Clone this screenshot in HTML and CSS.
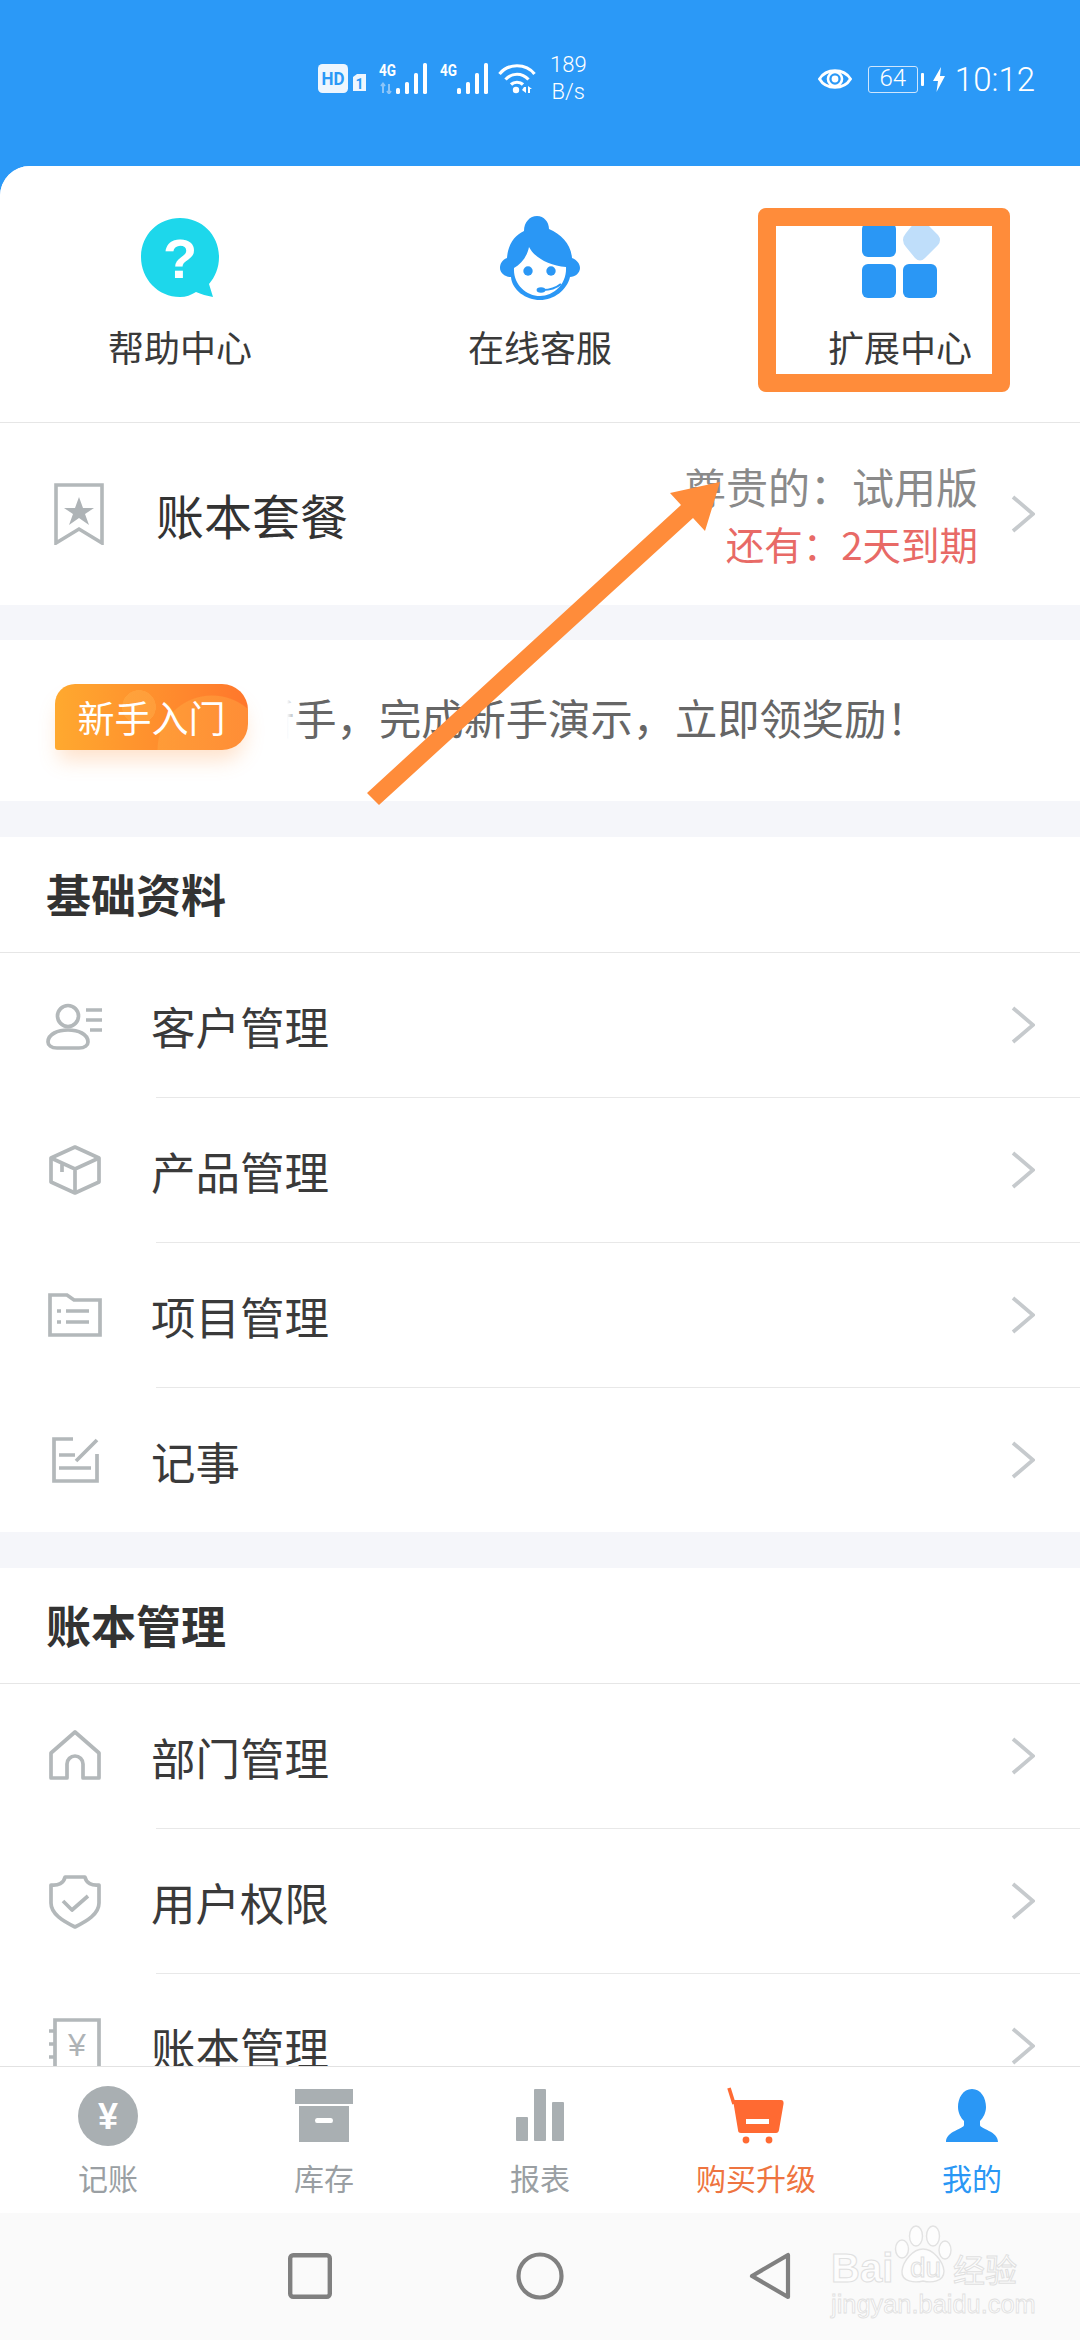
FILE: index.html
```html
<!DOCTYPE html>
<html lang="zh-CN">
<head>
  <meta charset="UTF-8" />
  <meta name="viewport" content="width=device-width, initial-scale=1.0"/>
  <title>我的</title>
  <link rel="stylesheet" href="styles.css">
</head>
<body>
  <svg class="defs" width="0" height="0">
    <symbol id="chevron" viewBox="0 0 24 38">
      <path d="M2 2 L22 19 L2 36" fill="none" stroke="#c6cacd" stroke-width="3.8"/>
    </symbol>
    <symbol id="bars" viewBox="0 0 50 31">
      <rect x="17" y="25" width="4" height="6" rx="1.6" fill="#fff"/>
      <rect x="26" y="19" width="4" height="12" rx="1.6" fill="#fff"/>
      <rect x="35" y="10" width="4" height="21" rx="1.6" fill="#fff"/>
      <rect x="44" y="0" width="4" height="31" rx="1.6" fill="#fff"/>
    </symbol>
  </svg>

  <div class="page">
    <header class="statusbar">
      <div class="status-left">
        <svg class="st-hd" width="50" height="30" viewBox="0 0 50 30">
          <rect x="0" y="0" width="30" height="29" rx="4.5" fill="#eef6fe"/>
          <text x="15" y="21" class="st-bold" text-anchor="middle" font-size="18" fill="#2b99f7" textLength="23" lengthAdjust="spacingAndGlyphs">HD</text>
          <path d="M35 13 L39 10 H48 V27 H35Z" fill="#eef6fe"/>
          <text x="41.5" y="24.5" class="st-bold" text-anchor="middle" font-size="14" fill="#2b99f7">1</text>
        </svg>
        <svg class="st-signal" width="50" height="37" viewBox="0 -6 50 37">
          <text x="0" y="13" class="st-bold" font-size="17" fill="#fff" textLength="17" lengthAdjust="spacingAndGlyphs">4G</text>
          <path d="M4 30 V21 M2 23 L4 20.5 L6 23 M10 21 V30 M8 28 L10 30.5 L12 28" fill="none" stroke="#8cc5f8" stroke-width="2"/>
          <use href="#bars" width="50" height="31"/>
        </svg>
        <svg class="st-signal" width="50" height="37" viewBox="0 -6 50 37">
          <text x="0" y="13" class="st-bold" font-size="17" fill="#fff" textLength="17" lengthAdjust="spacingAndGlyphs">4G</text>
          <use href="#bars" width="50" height="31"/>
        </svg>
        <svg class="st-wifi" width="38" height="30" viewBox="0 0 38 30">
          <g fill="none" stroke="#fff" stroke-width="3.2">
            <path d="M1.5 10 C10 -1 28 -1 36.5 10"/>
            <path d="M7.5 15.5 C14 8.5 24 8.5 30.5 15.5"/>
            <path d="M13 20.5 C16 17.5 22 17.5 25 20.5"/>
          </g>
          <circle cx="18" cy="26" r="3.2" fill="#fff"/>
          <path d="M26 23 H28 V29 L24 26Z M30 22 L34 25 L30 25Z M30 25 H32 V29 H30Z" fill="#fff"/>
        </svg>
        <div class="st-speed"><span>189</span><span>B/s</span></div>
      </div>
      <div class="status-right">
        <svg width="34" height="26" viewBox="0 0 34 26">
          <path d="M1.5 13 C8 2 26 2 32.5 13 C26 24 8 24 1.5 13Z" fill="none" stroke="#fff" stroke-width="2.8"/>
          <circle cx="17" cy="13" r="7" fill="none" stroke="#fff" stroke-width="2.6"/>
          <circle cx="17" cy="13" r="3.4" fill="#fff"/>
        </svg>
        <div class="st-battery">64</div>
        <span class="st-tip"></span>
        <svg width="12" height="25" viewBox="0 0 12 25"><path d="M8 0 L0 14 H5 L3.5 25 L12 9 H7Z" fill="#fff"/></svg>
        <span class="st-time">10:12</span>
      </div>
    </header>

    <main class="content">
      <section class="shortcuts">
        <div class="shortcut">
          <svg class="shortcut-icon" width="78" height="84" viewBox="0 0 78 80">
            <path d="M39 0 C61 0 78 17 78 39 C78 50 74 59 68 66 L72 79 C66 78 60 76 55 74 C50 77 45 79 39 79 C17 79 0 61 0 39 C0 17 17 0 39 0Z" fill="#1dd7eb"/>
            <text x="39" y="60" text-anchor="middle" font-size="56" font-weight="700" class="icon-glyph" fill="#fff">?</text>
          </svg>
          <span>帮助中心</span>
        </div>
        <div class="shortcut">
          <svg class="shortcut-icon" width="82" height="84" viewBox="0 0 82 84">
            <path d="M8 42 C9 28 16 19 25 15 C25 6 31 0 38 0 C45 0 50 6 50 13 C62 18 72 28 73 42 C78 44 81 48 81 52 C81 57 76 61 71 61 C68 74 55 84 41 84 C27 84 13 74 12 61 C6 61 1 57 1 52 C1 48 3 44 8 42Z" fill="#2a97f5"/>
            <path d="M15 52 C22 48 28 41 30 31 C35 41 50 50 67 51 C68 68 55 80 41 80 C27 80 14 68 15 52Z" fill="#fff"/>
            <circle cx="29" cy="55" r="4.7" fill="#2a97f5"/>
            <circle cx="52" cy="55" r="4.7" fill="#2a97f5"/>
            <path d="M62 68 C57 72 50 74 44 74" fill="none" stroke="#2a97f5" stroke-width="2.2"/>
            <ellipse cx="42" cy="74" rx="4.4" ry="2.8" fill="#2a97f5"/>
          </svg>
          <span>在线客服</span>
        </div>
        <div class="shortcut">
          <svg class="shortcut-icon" width="80" height="84" viewBox="0 0 80 84">
            <rect x="2" y="7" width="34" height="34" rx="6" fill="#2a97f5"/>
            <rect x="2" y="48" width="34" height="34" rx="6" fill="#2a97f5"/>
            <rect x="43" y="48" width="34" height="34" rx="6" fill="#2a97f5"/>
            <path d="M55 6 Q60 0 65 6 L78 19 Q82 24 78 29 L65 42 Q60 47 55 42 L46 31 Q40 24 46 17Z" fill="#bfdefa"/>
          </svg>
          <span>扩展中心</span>
        </div>
      </section>

      <section class="package">
        <svg class="package-icon" width="50" height="62" viewBox="0 0 50 62">
          <path d="M2 2 H48 V60 L25 46 L2 60Z" fill="none" stroke="#b3b8ba" stroke-width="3.6"/>
          <path d="M25 14 L29 25 H40 L31 31 L35 42 L25 35 L15 42 L19 31 L10 25 H21Z" fill="#aeb3b6"/>
        </svg>
        <span class="package-name">账本套餐</span>
        <div class="package-info">
          <span class="package-plan">尊贵的：试用版</span>
          <span class="package-expire">还有：2天到期</span>
        </div>
        <svg class="chevron"><use href="#chevron"/></svg>
      </section>

      <section class="banner">
        <div class="banner-badge">新手入门</div>
        <div class="banner-marquee"><span>新手，完成新手演示，立即领奖励！</span></div>
      </section>

      <section class="group">
        <h2 class="group-title">基础资料</h2>
        <div class="row">
          <svg class="row-icon" viewBox="0 0 60 60">
            <g fill="none" stroke="#b3b8ba" stroke-width="3.7">
              <circle cx="23" cy="21" r="10.5"/>
              <path d="M12 53 C6 53 3 50 3 47 C3 39 13 35 23 35 C33 35 43 39 43 47 C43 50 40 53 34 53Z"/>
              <path d="M41 15 H57 M41 25 H57 M45 35 H57"/>
            </g>
          </svg>
          <span class="row-text">客户管理</span>
          <svg class="chevron"><use href="#chevron"/></svg>
        </div>
        <hr class="divider">
        <div class="row">
          <svg class="row-icon" viewBox="0 0 60 60">
            <g fill="none" stroke="#b3b8ba" stroke-width="3.7" stroke-linejoin="round">
              <path d="M30 7 L54 18 V42 L30 53 L6 42 V18Z"/>
              <path d="M6 18 L30 29 L54 18 M30 29 V53 M17 24 V32"/>
            </g>
          </svg>
          <span class="row-text">产品管理</span>
          <svg class="chevron"><use href="#chevron"/></svg>
        </div>
        <hr class="divider">
        <div class="row">
          <svg class="row-icon" viewBox="0 0 60 60">
            <g fill="none" stroke="#b3b8ba" stroke-width="3.7">
              <path d="M5 10 H22 L29 15 H55 V50 H5Z"/>
              <path d="M12 26 H16 M12 37 H16 M21 26 H44 M21 37 H44"/>
            </g>
          </svg>
          <span class="row-text">项目管理</span>
          <svg class="chevron"><use href="#chevron"/></svg>
        </div>
        <hr class="divider">
        <div class="row">
          <svg class="row-icon" viewBox="0 0 60 60">
            <g fill="none" stroke="#b3b8ba" stroke-width="3.7">
              <path d="M28 9 H9 V51 H52 V24"/>
              <path d="M14 25 H30 M14 38 H46 M31 31 L52 10"/>
            </g>
          </svg>
          <span class="row-text">记事</span>
          <svg class="chevron"><use href="#chevron"/></svg>
        </div>
      </section>

      <section class="group">
        <h2 class="group-title">账本管理</h2>
        <div class="row">
          <svg class="row-icon" viewBox="0 0 60 60">
            <path d="M30 6 L54 27 V52 H38 V38 A8 8 0 0 0 22 38 V52 H6 V27Z" fill="none" stroke="#b3b8ba" stroke-width="3.7" stroke-linejoin="round"/>
          </svg>
          <span class="row-text">部门管理</span>
          <svg class="chevron"><use href="#chevron"/></svg>
        </div>
        <hr class="divider">
        <div class="row">
          <svg class="row-icon" viewBox="0 0 60 60">
            <g fill="none" stroke="#b3b8ba" stroke-width="3.7" stroke-linejoin="round">
              <path d="M20 6 H40 C41 12 47 15 54 14 V32 C54 43 42 50 30 56 C18 50 6 43 6 32 V14 C13 15 19 12 20 6Z"/>
              <path d="M18 30 L27 39 L43 25"/>
            </g>
          </svg>
          <span class="row-text">用户权限</span>
          <svg class="chevron"><use href="#chevron"/></svg>
        </div>
        <hr class="divider">
        <div class="row">
          <svg class="row-icon" viewBox="0 0 60 60">
            <g fill="none" stroke="#b3b8ba" stroke-width="3.7">
              <path d="M10 4 H54 V56 H10Z"/>
              <path d="M4 15 H11 M4 28 H11 M4 41 H11"/>
            </g>
            <text x="32" y="40" text-anchor="middle" font-size="32" class="icon-glyph" fill="#aeb3b6">¥</text>
          </svg>
          <span class="row-text">账本管理</span>
          <svg class="chevron"><use href="#chevron"/></svg>
        </div>
      </section>
    </main>

    <nav class="tabbar">
      <div class="tab">
        <svg width="60" height="60" viewBox="0 0 60 60">
          <circle cx="30" cy="30" r="30" fill="#a9afb2"/>
          <text x="30" y="43" text-anchor="middle" font-size="36" font-weight="700" class="icon-glyph" fill="#fff">¥</text>
        </svg>
        <span>记账</span>
      </div>
      <div class="tab">
        <svg width="60" height="60" viewBox="0 0 60 60">
          <rect x="1" y="3" width="58" height="15" fill="#a9afb2"/>
          <path d="M5 20 H55 V56 H5Z M23 32 Q21 32 21 34.5 Q21 37 23 37 H37 Q39 37 39 34.5 Q39 32 37 32Z" fill="#a9afb2" fill-rule="evenodd"/>
        </svg>
        <span>库存</span>
      </div>
      <div class="tab">
        <svg width="60" height="60" viewBox="0 0 60 60">
          <rect x="6" y="31" width="12" height="24" rx="1" fill="#a9afb2"/>
          <rect x="24" y="3" width="12" height="52" rx="1" fill="#a9afb2"/>
          <rect x="42" y="16" width="12" height="39" rx="1" fill="#a9afb2"/>
        </svg>
        <span>报表</span>
      </div>
      <div class="tab tab-orange">
        <svg width="60" height="60" viewBox="0 0 60 60">
          <path d="M3 2 L8 18" stroke="#ff6a32" stroke-width="3.6" fill="none"/>
          <path d="M7 14 H55 Q58 14 57.5 18 L53 44 Q52.5 47 50 47 H15 Q12 47 12 44Z M20 33 V38 H43 V33Z" fill="#ff6a32" fill-rule="evenodd"/>
          <circle cx="20" cy="54" r="3.4" fill="#ff6a32"/>
          <circle cx="43" cy="54" r="3.4" fill="#ff6a32"/>
        </svg>
        <span>购买升级</span>
      </div>
      <div class="tab tab-blue">
        <svg width="60" height="60" viewBox="0 0 60 60">
          <path d="M30 3 C39 3 44 12 44 21 C44 27 41 32 38 35 V39 C38 43 56 45 56 56 H4 C4 45 22 43 22 39 V35 C19 32 16 27 16 21 C16 12 21 3 30 3Z" fill="#2a97f5"/>
        </svg>
        <span>我的</span>
      </div>
    </nav>

    <footer class="navbar">
      <svg width="44" height="46" viewBox="0 0 44 46"><rect x="2.2" y="2.2" width="39.6" height="41.6" rx="3" fill="none" stroke="#808080" stroke-width="4.4"/></svg>
      <svg width="48" height="48" viewBox="0 0 48 48"><circle cx="24" cy="24" r="21.5" fill="none" stroke="#808080" stroke-width="4.2"/></svg>
      <svg width="42" height="48" viewBox="0 0 42 48"><path d="M39 3 V45 L3 24Z" fill="none" stroke="#808080" stroke-width="4.2" stroke-linejoin="round"/></svg>
    </footer>

    <!-- baidu jingyan watermark -->
    <div class="watermark">
      <svg class="wm-paw" width="60" height="60" viewBox="0 0 60 60">
        <g fill="#fdfdfd" stroke="#e2e2e2" stroke-width="1.4">
          <ellipse cx="9" cy="24" rx="6.5" ry="9"/>
          <ellipse cx="23" cy="11" rx="6.5" ry="10"/>
          <ellipse cx="40" cy="11" rx="6.5" ry="10"/>
          <ellipse cx="52" cy="25" rx="6" ry="9"/>
          <path d="M30 24 C40 24 50 36 51 46 C51 57 38 58 30 56 C22 58 8 57 9 46 C10 36 20 24 30 24Z"/>
        </g>
      </svg>
      <div class="wm-top"><span class="wm-bai">Bai</span><span class="wm-du">du</span><span class="wm-cn">经验</span></div>
      <div class="wm-url">jingyan.baidu.com</div>
    </div>

    <!-- orange markup drawn on the screenshot -->
    <div class="mark-box"></div>
    <svg class="mark-arrow" width="380" height="340" viewBox="0 0 380 340">
      <path d="M5 313 L319 25 L308 13 L358 2 L343 51 L331 38 L17 325Z" fill="#ff8c3a"/>
    </svg>
  </div>
</body>
</html>
```

FILE: styles.css
```css
* {
  box-sizing: border-box;
}

body {
  margin: 0;
  font-family: "Noto Sans CJK SC", "Noto Sans", sans-serif;
  color: #333;
  background: #fff;
}

.defs {
  position: absolute;
}

.page {
  position: relative;
  width: 1080px;
  height: 2340px;
  display: flex;
  flex-direction: column;
  overflow: hidden;
  background: #2b99f7;
}

/* status bar */
.statusbar {
  height: 166px;
  flex: none;
  display: flex;
  justify-content: space-between;
  align-items: flex-start;
  padding: 57px 45px 0 318px;
  color: #fff;
  font-family: Roboto, sans-serif;
}

.st-bold {
  font-family: Roboto, sans-serif;
  font-weight: 700;
}

.status-left {
  display: flex;
  align-items: flex-start;
}

.st-hd {
  margin: 7px 11px 0 0;
}

.st-signal {
  margin: 0 11px 0 0;
}

.st-wifi {
  margin: 7px 14px 0 -3px;
}

.st-speed {
  display: flex;
  flex-direction: column;
  align-items: center;
  margin-top: -6px;
  font-size: 22px;
  line-height: 27px;
  font-weight: 300;
}

.status-right {
  display: flex;
  align-items: center;
  height: 26px;
  margin-top: 9px;
}

.st-battery {
  width: 50px;
  height: 27px;
  margin-left: 16px;
  border: 1.5px solid #cfe6fd;
  border-radius: 3px;
  font-size: 24px;
  line-height: 23px;
  font-weight: 300;
  text-align: center;
}

.st-tip {
  width: 3px;
  height: 13px;
  margin: 0 9px 0 3px;
  background: #fff;
  border-radius: 1px;
}

.st-time {
  margin-left: 10px;
  font-size: 33px;
  font-weight: 300;
}

.icon-glyph {
  font-family: "Liberation Sans", sans-serif;
}

/* scrolling part */
.content {
  flex: 1;
  min-height: 0;
  overflow: hidden;
  background: #f5f6fa;
  border-top-left-radius: 30px;
}

.shortcuts {
  height: 257px;
  display: grid;
  grid-template-columns: repeat(3, 1fr);
  background: #fff;
  border-bottom: 1px solid #e6e6e6;
  padding-top: 50px;
}

.shortcut {
  display: flex;
  flex-direction: column;
  align-items: center;
  font-size: 36px;
  line-height: 52px;
  color: #3a3a3a;
}

.shortcut-icon {
  height: 84px;
  margin-bottom: 20px;
}

.package {
  height: 182px;
  display: flex;
  align-items: center;
  padding: 0 45px 0 54px;
  background: #fff;
  margin-bottom: 35px;
}

.package-icon {
  flex: none;
}

.package-name {
  flex: 1;
  margin-left: 52px;
  font-size: 48px;
  color: #333;
}

.package-info {
  display: flex;
  flex-direction: column;
  align-items: flex-end;
  margin-right: 33px;
}

.package-plan {
  font-size: 42px;
  line-height: 58px;
  color: #8a8a8a;
}

.package-expire {
  font-size: 38.5px;
  line-height: 56px;
  color: #e86a66;
}

.chevron {
  width: 24px;
  height: 38px;
  flex: none;
}

.banner {
  height: 161px;
  display: flex;
  align-items: center;
  padding: 0 0 7px 55px;
  background: #fff;
  margin-bottom: 36px;
}

.banner-badge {
  width: 193px;
  height: 66px;
  flex: none;
  border-radius: 20px 26px 26px 3px;
  background:
    radial-gradient(circle 17px at 84px 23px, rgba(255, 190, 90, 0.3) 98%, transparent),
    radial-gradient(circle 55px at 157px 66px, rgba(255, 175, 70, 0.4) 98%, transparent),
    linear-gradient(90deg, #ffa92f, #ff772c);
  box-shadow: 0 14px 20px -4px rgba(255, 150, 70, 0.28);
  color: #fff;
  font-size: 37px;
  line-height: 66px;
  text-align: center;
}

.banner-marquee {
  position: relative;
  width: 680px;
  margin-left: 39px;
  overflow: hidden;
  white-space: nowrap;
  font-size: 42.3px;
  line-height: 60px;
  color: #666;
}

.banner-marquee span {
  display: inline-block;
  margin-left: -35px;
}

.banner-marquee::before {
  content: "";
  position: absolute;
  left: 0;
  top: 0;
  width: 14px;
  height: 100%;
  background: linear-gradient(90deg, #fff, rgba(255, 255, 255, 0));
}

.group {
  background: #fff;
  margin-bottom: 36px;
}

.group-title {
  margin: 0;
  height: 116px;
  padding-left: 46px;
  border-bottom: 1px solid #e6e6e6;
  font-size: 45px;
  line-height: 114px;
  font-weight: 700;
  color: #333;
}

.row {
  height: 144px;
  display: flex;
  align-items: center;
  padding: 0 45px;
}

.row-icon {
  width: 60px;
  height: 60px;
  flex: none;
}

.row-text {
  flex: 1;
  margin-left: 46px;
  font-size: 44.5px;
  color: #3a3a3a;
}

.divider {
  height: 1px;
  margin: 0 0 0 156px;
  border: 0;
  background: #e8e8e8;
}

/* bottom tabs */
.tabbar {
  height: 147px;
  flex: none;
  display: grid;
  grid-template-columns: repeat(5, 1fr);
  background: #fff;
  border-top: 1px solid #e2e2e2;
  padding-top: 19px;
}

.tab {
  display: flex;
  flex-direction: column;
  align-items: center;
  font-size: 30px;
  line-height: 40px;
  color: #9a9fa3;
}

.tab svg {
  margin-bottom: 11px;
}

.tab-orange {
  color: #ee7440;
}

.tab-blue {
  color: #2a97f5;
}

.navbar {
  height: 127px;
  flex: none;
  display: grid;
  grid-template-columns: 288px 44px 184px 48px 185px 42px;
  align-items: center;
  padding-bottom: 2px;
  background: #fafafa;
}

.navbar svg:nth-child(1) {
  grid-column: 2;
}

.navbar svg:nth-child(2) {
  grid-column: 4;
}

.navbar svg:nth-child(3) {
  grid-column: 6;
}

.watermark {
  position: absolute;
  left: 831px;
  top: 2225px;
  width: 194px;
  height: 92px;
  color: #fdfdfd;
}

.wm-paw {
  position: absolute;
  left: 62px;
  top: 0;
}

.wm-top {
  position: absolute;
  left: 0;
  top: 20px;
  display: flex;
  align-items: center;
  font-family: "Liberation Sans", sans-serif;
  font-weight: 700;
  line-height: 46px;
  -webkit-text-stroke: 1px #e0e0e0;
}

.wm-bai {
  width: 63px;
  font-size: 40px;
}

.wm-du {
  width: 59px;
  padding-left: 16px;
  font-size: 28px;
  font-weight: 400;
}

.wm-cn {
  font-family: "Noto Sans CJK SC", sans-serif;
  font-size: 32px;
  font-weight: 400;
}

.wm-url {
  position: absolute;
  left: 0;
  top: 65px;
  font-family: "Liberation Sans", sans-serif;
  font-size: 25.4px;
  line-height: 28px;
  -webkit-text-stroke: 0.8px #e0e0e0;
  white-space: nowrap;
}

/* annotation on top of the screenshot */
.mark-box {
  position: absolute;
  left: 758px;
  top: 208px;
  width: 252px;
  height: 184px;
  border: 18px solid #ff8c3a;
  border-radius: 8px;
}

.mark-arrow {
  position: absolute;
  left: 362px;
  top: 480px;
}
```
